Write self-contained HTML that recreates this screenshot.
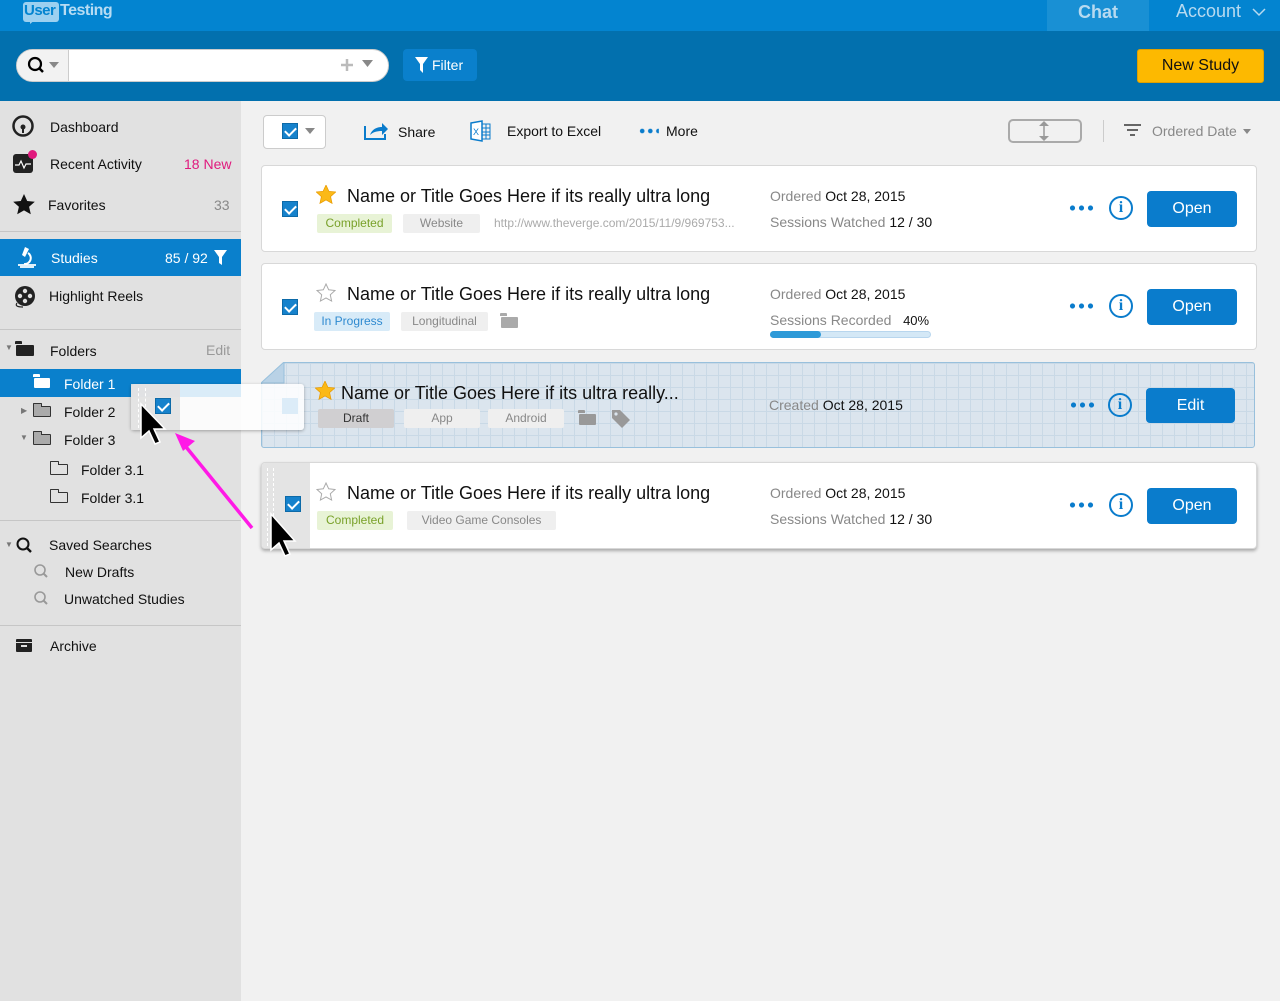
<!DOCTYPE html>
<html><head><meta charset="utf-8"><style>
*{margin:0;padding:0;box-sizing:border-box}
body{width:1280px;height:1001px;position:relative;overflow:hidden;background:#f1f1f1;font-family:"Liberation Sans",Arial,sans-serif;font-size:14px;color:#111}
.a{position:absolute}
.top{left:0;top:0;width:1280px;height:31px;background:#0384d0}
.bar2{left:0;top:31px;width:1280px;height:70px;background:#0270ae}
.side{left:0;top:101px;width:241px;height:900px;background:#e1e1e1}
.hr{height:1px;background:#c6c6c6;left:0;width:241px}
.cb{width:16px;height:16px;background:#1682cc;border:1px solid #0d6aa8;}
.cb:after{content:"";position:absolute;left:4px;top:1px;width:5px;height:9px;border:solid #fff;border-width:0 2px 2px 0;transform:rotate(45deg)}
.card{background:#fff;border:1px solid #d8d8d8;border-radius:4px;left:261px;width:996px;height:87px}
.title{font-size:18px;color:#111}
.tag{height:19px;line-height:19px;font-size:12px;text-align:center;border-radius:2px;background:#efefef;color:#888}
.green{background:#e8f3d6;color:#79a12a}
.grey{color:#888;font-size:14px}
.btn{width:90px;height:36px;background:#0a7ccc;color:#fff;border-radius:4px;font-size:16px;line-height:36px;text-align:center}
.dots{width:26px;height:6px;background:radial-gradient(circle,#0a7ccc 2.3px,transparent 2.8px) 0 0/9px 6px repeat-x}
.info{width:24px;height:24px;border:2px solid #0a7ccc;border-radius:50%;color:#0a7ccc;font:bold 16px "Liberation Serif",serif;text-align:center;line-height:20px}
.si{font-size:14px}
.fold{border-radius:1px}
.fold:before{content:"";position:absolute;left:-1px;top:-4px;width:7px;height:3px;background:inherit;border:inherit;border-bottom:0;border-radius:1px 1px 0 0}
</style></head><body>
<div class="a top"></div>
<div class="a" style="left:23px;top:2px;width:36px;height:20px;background:#9cd0f0;border-radius:3px"></div>
<div class="a" style="left:30px;top:19px;width:0;height:0;border-left:6px solid #9cd0f0;border-bottom:5px solid transparent"></div>
<div class="a" style="left:24px;top:2px;font:bold 15px 'Liberation Sans';color:#0384d0;letter-spacing:-0.5px">User</div>
<div class="a" style="left:60px;top:2px;font:bold 16px 'Liberation Sans';color:#b7dcf3;letter-spacing:-0.5px">Testing</div>
<div class="a" style="left:1047px;top:0;width:102px;height:31px;background:#1990d4;color:#b7daf0;font:bold 18px 'Liberation Sans';text-align:center;line-height:25px">Chat</div>
<div class="a" style="left:1176px;top:0;color:#b7daf0;font-size:18px;line-height:23px">Account</div>
<svg class="a" style="left:1252px;top:8px" width="14" height="9"><path d="M1 1l6 6 6-6" stroke="#b7daf0" fill="none" stroke-width="1.5"/></svg>
<div class="a bar2"></div>
<div class="a" style="left:16px;top:49px;width:373px;height:33px;background:#fff;border-radius:17px;border:1px solid #ccc"></div>
<div class="a" style="left:17px;top:50px;width:52px;height:31px;background:#f2f2f2;border-radius:16px 0 0 16px;border-right:1px solid #ccc"></div>
<svg class="a" style="left:27px;top:56px" width="36" height="20"><circle cx="8" cy="8" r="6" fill="none" stroke="#000" stroke-width="2.2"/><line x1="12" y1="12" x2="16" y2="16" stroke="#000" stroke-width="2.5"/><path d="M22 6h10l-5 6z" fill="#888"/></svg>
<svg class="a" style="left:341px;top:59px" width="12" height="12"><path d="M6 0v12M0 6h12" stroke="#bbb" stroke-width="2.5"/></svg>
<svg class="a" style="left:362px;top:60px" width="12" height="8"><path d="M0 0h11l-5.5 7z" fill="#888"/></svg>
<div class="a" style="left:403px;top:49px;width:74px;height:32px;background:#0a80cc;border-radius:4px;color:#fff;font-size:14px;line-height:32px;padding-left:29px">Filter</div>
<svg class="a" style="left:415px;top:57px" width="14" height="17"><path d="M0 0h13l-5 7v9l-3-3v-6z" fill="#fff"/></svg>
<div class="a" style="left:1137px;top:49px;width:127px;height:34px;background:#fdb900;border:1px solid #e0a000;border-radius:3px;text-align:center;line-height:32px;font-size:16px">New Study</div>

<div class="a side"></div>
<svg class="a" style="left:12px;top:115px" width="22" height="22"><circle cx="11" cy="11" r="9.5" fill="none" stroke="#222" stroke-width="2.5"/><circle cx="11" cy="12" r="2.5" fill="#222"/><line x1="11" y1="12" x2="11" y2="18" stroke="#222" stroke-width="2"/></svg>
<div class="a si" style="left:50px;top:119px">Dashboard</div>
<div class="a" style="left:13px;top:154px;width:20px;height:19px;background:#222;border-radius:3px"></div>
<svg class="a" style="left:13px;top:154px" width="20" height="19"><path d="M2 11h4l2-4 3 7 2-4h5" stroke="#fff" fill="none" stroke-width="1.2"/></svg>
<div class="a" style="left:28px;top:150px;width:9px;height:9px;border-radius:50%;background:#e0197d"></div>
<div class="a si" style="left:50px;top:156px">Recent Activity</div>
<div class="a si" style="left:184px;top:156px;color:#e0197d">18 New</div>
<svg class="a" style="left:13px;top:194px" width="22" height="21"><path d="M11 0l3.2 7 7.6.8-5.7 5 1.7 7.5L11 16.4 4.2 20.3l1.7-7.5L.2 7.8 7.8 7z" fill="#111"/></svg>
<div class="a si" style="left:48px;top:197px">Favorites</div>
<div class="a si" style="left:214px;top:197px;color:#888">33</div>
<div class="a hr" style="top:231px"></div>
<div class="a" style="left:0;top:239px;width:241px;height:37px;background:#0a80cc"></div>
<svg class="a" style="left:16px;top:246px" width="22" height="22"><path d="M9 1l4 2-4 8-3-2z" fill="#fff"/><path d="M12 7a6 6 0 0 1 -4 11" stroke="#fff" fill="none" stroke-width="2"/><path d="M2 19h18M4 21h14" stroke="#fff" stroke-width="1.8"/></svg>
<div class="a si" style="left:51px;top:250px;color:#fff">Studies</div>
<div class="a si" style="left:165px;top:250px;color:#fff">85 / 92</div>
<svg class="a" style="left:214px;top:250px" width="14" height="16"><path d="M0 0h13l-5 7v8l-3-2v-6z" fill="#fff"/></svg>
<svg class="a" style="left:14px;top:285px" width="24" height="24"><circle cx="11" cy="11" r="10" fill="#222"/><circle cx="11" cy="6" r="2.2" fill="#e1e1e1"/><circle cx="11" cy="16" r="2.2" fill="#e1e1e1"/><circle cx="6" cy="11" r="2.2" fill="#e1e1e1"/><circle cx="16" cy="11" r="2.2" fill="#e1e1e1"/><path d="M3 18q-3 4 6 4" stroke="#222" fill="none" stroke-width="1.2"/></svg>
<div class="a si" style="left:49px;top:288px">Highlight Reels</div>
<div class="a hr" style="top:329px"></div>
<div class="a" style="left:5px;top:343px;font-size:8px;color:#777">▼</div>
<div class="a fold" style="left:16px;top:345px;width:18px;height:11px;background:#222"></div>
<div class="a si" style="left:50px;top:343px">Folders</div>
<div class="a si" style="left:206px;top:342px;color:#999">Edit</div>
<div class="a" style="left:0;top:369px;width:241px;height:28px;background:#0a80cc"></div>
<div class="a fold" style="left:34px;top:378px;width:16px;height:10px;background:#fff"></div>
<div class="a si" style="left:64px;top:376px;color:#fff">Folder 1</div>
<div class="a" style="left:21px;top:406px;font-size:8px;color:#777">▶</div>
<div class="a fold" style="left:33px;top:406px;width:18px;height:11px;background:#aaa;border:1px solid #333"></div>
<div class="a si" style="left:64px;top:404px">Folder 2</div>
<div class="a" style="left:20px;top:433px;font-size:8px;color:#777">▼</div>
<div class="a fold" style="left:33px;top:434px;width:18px;height:11px;background:#aaa;border:1px solid #333"></div>
<div class="a si" style="left:64px;top:432px">Folder 3</div>
<div class="a fold" style="left:50px;top:464px;width:18px;height:11px;border:1px solid #333;background:#e1e1e1"></div>
<div class="a si" style="left:81px;top:462px">Folder 3.1</div>
<div class="a fold" style="left:50px;top:492px;width:18px;height:11px;border:1px solid #333;background:#e1e1e1"></div>
<div class="a si" style="left:81px;top:490px">Folder 3.1</div>
<div class="a hr" style="top:520px"></div>
<div class="a" style="left:5px;top:540px;font-size:8px;color:#777">▼</div>
<svg class="a" style="left:16px;top:537px" width="18" height="18"><circle cx="7" cy="7" r="5.5" fill="none" stroke="#111" stroke-width="2"/><line x1="11" y1="11" x2="15" y2="15" stroke="#111" stroke-width="2.4"/></svg>
<div class="a si" style="left:49px;top:537px">Saved Searches</div>
<svg class="a" style="left:33px;top:563px" width="18" height="18"><circle cx="7" cy="7" r="5" fill="none" stroke="#999" stroke-width="1.6"/><line x1="10.5" y1="10.5" x2="14" y2="14" stroke="#999" stroke-width="2"/></svg>
<div class="a si" style="left:65px;top:564px">New Drafts</div>
<svg class="a" style="left:33px;top:590px" width="18" height="18"><circle cx="7" cy="7" r="5" fill="none" stroke="#999" stroke-width="1.6"/><line x1="10.5" y1="10.5" x2="14" y2="14" stroke="#999" stroke-width="2"/></svg>
<div class="a si" style="left:64px;top:591px">Unwatched Studies</div>
<div class="a hr" style="top:625px"></div>
<div class="a" style="left:16px;top:639px;width:16px;height:13px;background:#222;border-radius:1px"></div>
<div class="a" style="left:16px;top:642px;width:16px;height:1px;background:#e1e1e1"></div>
<div class="a" style="left:21px;top:645px;width:6px;height:2px;background:#e1e1e1"></div>
<div class="a si" style="left:50px;top:638px">Archive</div>

<!-- toolbar -->
<div class="a" style="left:263px;top:115px;width:63px;height:34px;background:#fff;border:1px solid #ccc;border-radius:4px"></div>
<div class="a cb" style="left:282px;top:123px"></div>
<svg class="a" style="left:305px;top:128px" width="11" height="8"><path d="M0 0h10l-5 6z" fill="#888"/></svg>
<svg class="a" style="left:364px;top:121px" width="26" height="20"><path d="M1 5v13h20v-5" stroke="#0a7ccc" stroke-width="2" fill="none"/><path d="M6 14c2-6 7-8 12-8v-4l6 6-6 6v-4c-5 0-9 1-12 4z" fill="#0a7ccc"/></svg>
<div class="a si" style="left:398px;top:124px">Share</div>
<svg class="a" style="left:470px;top:120px" width="22" height="22"><path d="M1 3l11-2v20l-11-2z" fill="#fff" stroke="#0a7ccc" stroke-width="1.5"/><path d="M12 4h8v15h-8M12 8h8M12 12h8M12 15h8M16 4v15" stroke="#0a7ccc" fill="none"/><text x="3" y="15" font-size="9" fill="#0a7ccc" font-family="Liberation Sans">X</text></svg>
<div class="a si" style="left:507px;top:123px">Export to Excel</div>
<div class="a dots" style="left:637px;top:128px;width:23px;transform:scale(.9)"></div>
<div class="a si" style="left:666px;top:123px">More</div>
<div class="a" style="left:1008px;top:119px;width:74px;height:24px;border:2px solid #aaa;border-radius:5px"></div>
<svg class="a" style="left:1038px;top:121px" width="12" height="20"><path d="M6 0l5 5H1zM6 20l5-5H1z" fill="#999"/><path d="M6 5v10" stroke="#999" stroke-width="1.5"/></svg>
<div class="a" style="left:1103px;top:120px;width:1px;height:22px;background:#ccc"></div>
<svg class="a" style="left:1124px;top:124px" width="18" height="14"><path d="M0 1h17M3 6h11M6 11h5" stroke="#666" stroke-width="2"/></svg>
<div class="a si" style="left:1152px;top:123px;color:#888">Ordered Date</div>
<svg class="a" style="left:1243px;top:129px" width="9" height="6"><path d="M0 0h8l-4 5z" fill="#888"/></svg>

<!-- card 1 -->
<div class="a card" style="top:165px"></div>
<div class="a cb" style="left:282px;top:201px"></div>
<svg class="a" style="left:316px;top:185px" width="20" height="19"><path d="M10 0l2.9 6.3 6.9.7-5.2 4.6 1.5 6.8L10 14.9l-6.1 3.5 1.5-6.8L.2 7l6.9-.7z" fill="#fbb917" stroke="#e89a00" stroke-width=".7"/></svg>
<div class="a title" style="left:347px;top:186px">Name or Title Goes Here if its really ultra long</div>
<div class="a tag green" style="left:317px;top:214px;width:75px">Completed</div>
<div class="a tag" style="left:403px;top:214px;width:77px">Website</div>
<div class="a" style="left:494px;top:216px;font-size:12px;color:#aaa">http://www.theverge.com/2015/11/9/969753...</div>
<div class="a grey" style="left:770px;top:188px">Ordered <span style="color:#111">Oct 28, 2015</span></div>
<div class="a grey" style="left:770px;top:214px">Sessions Watched <span style="color:#111">12 / 30</span></div>
<div class="a dots" style="left:1068px;top:205px"></div>
<div class="a info" style="left:1109px;top:196px">i</div>
<div class="a btn" style="left:1147px;top:191px">Open</div>

<!-- card 2 -->
<div class="a card" style="top:263px"></div>
<div class="a cb" style="left:282px;top:299px"></div>
<svg class="a" style="left:316px;top:283px" width="20" height="19"><path d="M10 1l2.7 5.8 6.3.7-4.7 4.3 1.3 6.2L10 14.9l-5.6 3.1 1.3-6.2L1 7.5l6.3-.7z" fill="none" stroke="#aaa" stroke-width="1"/></svg>
<div class="a title" style="left:347px;top:284px">Name or Title Goes Here if its really ultra long</div>
<div class="a tag" style="left:314px;top:312px;width:76px;background:#d8ebf8;color:#2f8ad0">In Progress</div>
<div class="a tag" style="left:401px;top:312px;width:87px">Longitudinal</div>
<div class="a fold" style="left:501px;top:317px;width:17px;height:11px;background:#aaa"></div>
<div class="a grey" style="left:770px;top:286px">Ordered <span style="color:#111">Oct 28, 2015</span></div>
<div class="a grey" style="left:770px;top:312px">Sessions Recorded &nbsp; <span style="color:#111;font-size:13px">40%</span></div>
<div class="a" style="left:770px;top:331px;width:161px;height:7px;background:#d4e8f6;border:1px solid #b8d6ee;border-radius:4px"></div>
<div class="a" style="left:770px;top:331px;width:51px;height:7px;background:#2e9ad8;border-radius:4px"></div>
<div class="a dots" style="left:1068px;top:303px"></div>
<div class="a info" style="left:1109px;top:294px">i</div>
<div class="a btn" style="left:1147px;top:289px">Open</div>

<!-- card 3 draft -->
<div class="a" style="left:261px;top:362px;width:994px;height:86px;border:1px solid #98c0dc;border-radius:3px;background-color:#dbe5ee;background-image:linear-gradient(#c9d9e6 1px,transparent 1px),linear-gradient(90deg,#c9d9e6 1px,transparent 1px);background-size:12px 12px"></div>
<svg class="a" style="left:261px;top:362px" width="24" height="22"><path d="M0 0h23L0 21z" fill="#f1f1f1"/><path d="M23 0L0 21h23z" fill="#b9d2e6" stroke="#98c0dc"/></svg>
<svg class="a" style="left:315px;top:381px" width="20" height="19"><path d="M10 0l2.9 6.3 6.9.7-5.2 4.6 1.5 6.8L10 14.9l-6.1 3.5 1.5-6.8L.2 7l6.9-.7z" fill="#fbb917" stroke="#e89a00" stroke-width=".7"/></svg>
<div class="a title" style="left:341px;top:383px">Name or Title Goes Here if its ultra really...</div>
<div class="a tag" style="left:318px;top:409px;width:76px;background:#d0cfd1;color:#333">Draft</div>
<div class="a tag" style="left:404px;top:409px;width:76px">App</div>
<div class="a tag" style="left:488px;top:409px;width:76px">Android</div>
<div class="a fold" style="left:579px;top:414px;width:17px;height:11px;background:#999"></div>
<svg class="a" style="left:611px;top:409px" width="20" height="20"><path d="M1 1h8l10 10-8 8L1 9z" fill="#999"/><circle cx="5" cy="5" r="1.6" fill="#dbe5ee"/></svg>
<div class="a grey" style="left:769px;top:397px">Created <span style="color:#111">Oct 28, 2015</span></div>
<div class="a dots" style="left:1069px;top:402px"></div>
<div class="a info" style="left:1108px;top:393px">i</div>
<div class="a btn" style="left:1146px;top:388px;width:89px;height:35px">Edit</div>

<!-- card 4 -->
<div class="a card" style="top:462px;box-shadow:0 2px 3px rgba(0,0,0,.3)"></div>
<div class="a" style="left:262px;top:463px;width:48px;height:85px;background:#e4e4e4;border-radius:3px 0 0 3px"></div>
<div class="a" style="left:267px;top:468px;width:0;height:78px;border-left:1px dashed #fff"></div>
<div class="a" style="left:273px;top:468px;width:0;height:78px;border-left:1px dashed #fff"></div>
<div class="a cb" style="left:285px;top:496px"></div>
<svg class="a" style="left:316px;top:482px" width="20" height="19"><path d="M10 1l2.7 5.8 6.3.7-4.7 4.3 1.3 6.2L10 14.9l-5.6 3.1 1.3-6.2L1 7.5l6.3-.7z" fill="none" stroke="#aaa" stroke-width="1"/></svg>
<div class="a title" style="left:347px;top:483px">Name or Title Goes Here if its really ultra long</div>
<div class="a tag green" style="left:317px;top:511px;width:76px">Completed</div>
<div class="a tag" style="left:407px;top:511px;width:149px">Video Game Consoles</div>
<div class="a grey" style="left:770px;top:485px">Ordered <span style="color:#111">Oct 28, 2015</span></div>
<div class="a grey" style="left:770px;top:511px">Sessions Watched <span style="color:#111">12 / 30</span></div>
<div class="a dots" style="left:1068px;top:502px"></div>
<div class="a info" style="left:1109px;top:493px">i</div>
<div class="a btn" style="left:1147px;top:488px">Open</div>
<svg class="a" style="left:268px;top:512px" width="30" height="48"><path d="M3 2v36l8-7 6 13 5-2-6-13h11z" fill="#000" stroke="#fff" stroke-width="1.5"/></svg>

<!-- drag ghost -->
<div class="a" style="left:131px;top:384px;width:173px;height:46px;background:rgba(255,255,255,.85);border-radius:3px;box-shadow:0 1px 3px rgba(0,0,0,.3)"></div>
<div class="a" style="left:131px;top:384px;width:49px;height:46px;background:rgba(225,225,225,.9)"></div>
<div class="a" style="left:138px;top:388px;height:40px;border-left:1px dashed #fff"></div>
<div class="a" style="left:145px;top:388px;height:40px;border-left:1px dashed #fff"></div>
<div class="a cb" style="left:155px;top:398px"></div>
<div class="a" style="left:282px;top:398px;width:16px;height:16px;background:#dcecf8"></div>
<svg class="a" style="left:138px;top:402px" width="30" height="46"><path d="M3 2v34l8-7 6 13 5-2-6-13h11z" fill="#000" stroke="#fff" stroke-width="1.5"/></svg>
<svg class="a" style="left:170px;top:430px" width="90" height="102"><path d="M82 98L12 12" stroke="#ff19e6" stroke-width="3.5"/><path d="M5 3l20 8-12 10z" fill="#ff19e6"/></svg>
</body></html>
